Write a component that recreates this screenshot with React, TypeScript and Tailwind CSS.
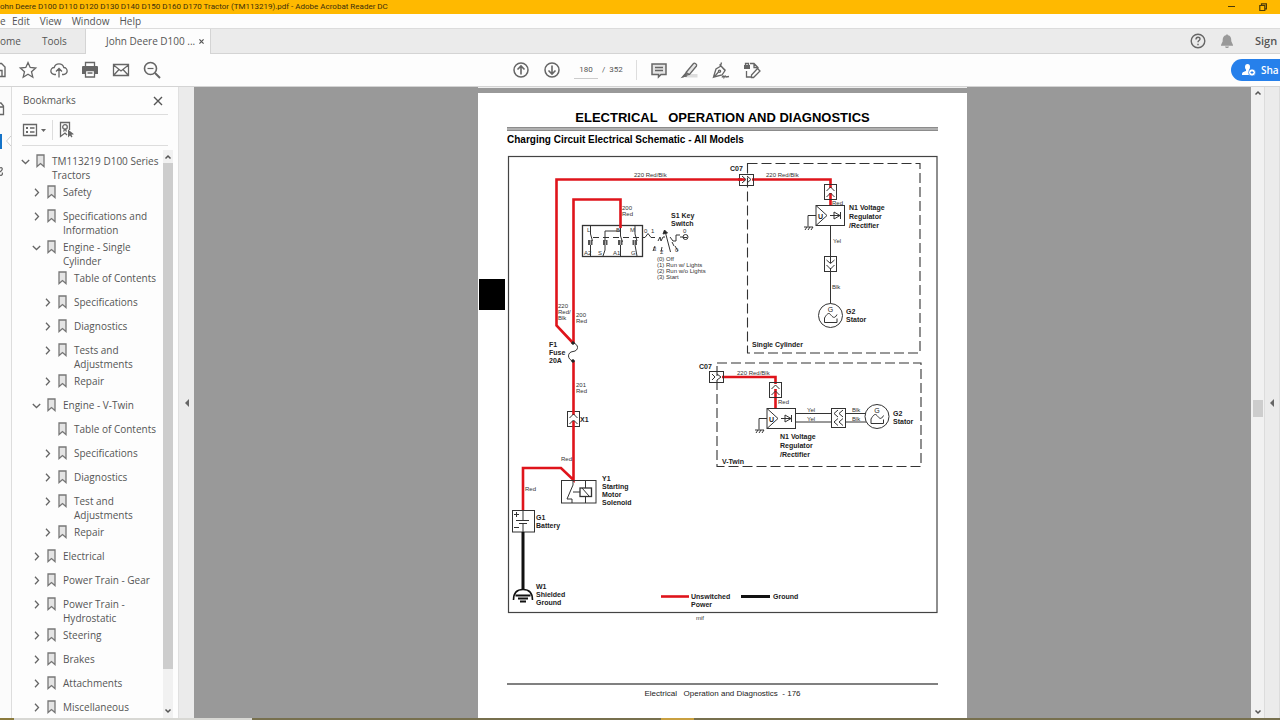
import React from "react";

type Bookmark = { title: string; state?: "open" | "closed"; children?: Bookmark[] };

const bookmarks: Bookmark[] = [
  {
    title: "TM113219 D100 Series Tractors",
    state: "open",
    children: [
      { title: "Safety", state: "closed" },
      { title: "Specifications and Information", state: "closed" },
      {
        title: "Engine - Single Cylinder",
        state: "open",
        children: [
          { title: "Table of Contents" },
          { title: "Specifications", state: "closed" },
          { title: "Diagnostics", state: "closed" },
          { title: "Tests and Adjustments", state: "closed" },
          { title: "Repair", state: "closed" },
        ],
      },
      {
        title: "Engine - V-Twin",
        state: "open",
        children: [
          { title: "Table of Contents" },
          { title: "Specifications", state: "closed" },
          { title: "Diagnostics", state: "closed" },
          { title: "Test and Adjustments", state: "closed" },
          { title: "Repair", state: "closed" },
        ],
      },
      { title: "Electrical", state: "closed" },
      { title: "Power Train - Gear", state: "closed" },
      { title: "Power Train - Hydrostatic", state: "closed" },
      { title: "Steering", state: "closed" },
      { title: "Brakes", state: "closed" },
      { title: "Attachments", state: "closed" },
      { title: "Miscellaneous", state: "closed" },
    ],
  },
];

function Icon({ children, className = "size-5" }: { children: React.ReactNode; className?: string }) {
  return (
    <svg viewBox="0 0 20 20" className={className} fill="none" stroke="#666" strokeWidth="1.3" aria-hidden="true">
      {children}
    </svg>
  );
}

function IconButton({ label, children }: { label: string; children: React.ReactNode }) {
  return (
    <button type="button" aria-label={label} className="size-5 shrink-0">
      <Icon>{children}</Icon>
    </button>
  );
}

function BookmarkGlyph() {
  return (
    <svg viewBox="0 0 9 14" className="h-[14px] w-[9px] shrink-0" aria-hidden="true">
      <path d="M1 1h7v11.6L4.500 9.600 1 12.600z" fill="#e4e4e4" stroke="#777" strokeWidth="1.300" />
    </svg>
  );
}

function Tree({ items, nested = false }: { items: Bookmark[]; nested?: boolean }) {
  return (
    <ul className={nested ? "pl-[11px]" : ""}>
      {items.map((item) => (
        <li key={item.title}>
          <div className="flex min-h-6 items-start pb-[3px]">
            {item.state ? (
              <button
                type="button"
                aria-label={item.title}
                aria-expanded={item.state === "open"}
                className="mt-[3px] size-[9px] shrink-0"
              >
                <svg viewBox="0 0 9 9" className="size-[9px]" fill="none" stroke="#666" strokeWidth="1.300">
                  <path d={item.state === "open" ? "M.8 3l3.700 3.500L8.200 3" : "M3 .8l3.500 3.700L3 8.200"} />
                </svg>
              </button>
            ) : (
              <span className="w-[9px] shrink-0" />
            )}
            <span className="ml-[6px] flex">
              <BookmarkGlyph />
            </span>
            <a href="#page" className="ml-[7px] leading-[14px]">
              {item.title}
            </a>
          </div>
          {item.children && <Tree items={item.children} nested />}
        </li>
      ))}
    </ul>
  );
}

function ScrollArrow({ up = false }: { up?: boolean }) {
  return (
    <svg viewBox="0 0 10 10" className="size-[10px] shrink-0" fill="none" stroke="#555" strokeWidth="1.500" aria-hidden="true">
      <path d={up ? "M2.500 6.500L5 4l2.500 2.500" : "M2.500 3.500L5 6l2.500-2.500"} />
    </svg>
  );
}

function TextLines({ x, y, lines, step = 8 }: { x: number; y: number; lines: string[]; step?: number }) {
  return (
    <text x={x} y={y}>
      {lines.map((line, i) => (
        <tspan key={line} x={x} y={y + i * step}>
          {line}
        </tspan>
      ))}
    </text>
  );
}

function Stator({ x, y }: { x: number; y: number }) {
  return (
    <g transform={`translate(${x} ${y})`}>
      <circle r="12" fill="#fff" />
      <path d="M-6 2.500C-4-1-2-3.500 0-1S4 4 6.500-1M-6 2.500V7H6.500V3" />
      <text x="0" y="-4" textAnchor="middle" fontSize="7" fill="#222" stroke="none">
        G
      </text>
    </g>
  );
}

function Regulator({ x, y }: { x: number; y: number }) {
  return (
    <g transform={`translate(${x} ${y})`}>
      <rect width="28.500" height="20" fill="#fff" />
      <path d="M0 0l11 10L0 20M14 10h11M18 6.500v7l6-3.500zM24.500 6.500v7" />
      <path d="M0 10h-8v11M-12 21.500h9M-9 21.500l-2 3M-6 21.500l-2 3M-3 21.500l-2 3" />
      <text x="2" y="13" fontSize="7" fontWeight="700" fill="#222" stroke="none">
        U
      </text>
    </g>
  );
}

function Schematic() {
  return (
    <svg
      viewBox="507 155 431 470"
      className="min-w-0 flex-1"
      fontFamily='"Liberation Sans", Arial, sans-serif'
      role="img"
      aria-label="Charging circuit schematic"
    >
      <rect x="508.500" y="156.500" width="428.500" height="456" fill="none" stroke="#444" strokeWidth="1.200" />

      <g fill="none" stroke="#333" strokeWidth="1.100" strokeDasharray="10 4">
        <rect x="747.500" y="163.500" width="172.500" height="189.500" />
        <rect x="717" y="363" width="204" height="103.500" />
      </g>

      <g fill="none" stroke="#333" strokeWidth="1">
        <path d="M830.500 225v79M795 413.500h72M795 422h72" />
        <rect x="582.500" y="225.500" width="60" height="31" strokeWidth="1.300" />
        <path d="M590.500 226v8l2 7M590.500 245v11M605 245v5l-2 6M605 241v-10h15M620.500 228v8l2 6M620.500 245v11M635 226v8l2 7M635 245l2 11" />
        <path d="M593 237.500h47" strokeDasharray="6 4" />
        <path d="M589 240v5M591.500 240v5M604 240v5M606.500 240v5M619 240v5M621.500 240v5M633.500 240v5M636 240v5" stroke="#555" strokeWidth="2" />
        <path d="M643 237.500h2l3-4 3 4h4M658 241l2-4 1 4 2-4h2M670 237l3 4h3v-6h4M680 237h3M655 246l-2 5M662 247l-1 5M665 231l5.500 21M672 242l2 4M675 246l3 5M687 237.500h-4" />
        <circle cx="685.500" cy="237" r="2.500" />
        <path d="M663 234l1.500-4 3 3z" fill="#222" />
      </g>

      <g fill="none" stroke="#df141b" strokeWidth="2.600">
        <path d="M742 179.500H556.500V325.500L573 343" />
        <path d="M620.500 228V199.500H573.500V343" />
        <path d="M573.500 361v119L561 468H523v43" />
        <path d="M752 179.500h78.500V188M830.500 193v12M722 377h53.500v7M775.500 389v19.500" />
        <path d="M661 596.500h28" />
      </g>

      <g fill="none" stroke="#333" strokeWidth="1">
        <rect x="739.500" y="174.500" width="14" height="11" />
        <path d="M738 179.500h7" stroke="#df141b" strokeWidth="2.600" />
        <path d="M742 176l4 3.500-4 3.500M747 176l4 3.500-4 3.500" />
        <rect x="709.500" y="371.500" width="14" height="11" />
        <path d="M712 374l3 3-3 3M717 374l4 3-4 3" />
        <rect x="824.500" y="184.500" width="12" height="15" />
        <path d="M826.500 191l4-4 4 4M826.500 197l4-4 4 4" />
        <rect x="769.500" y="382.500" width="12" height="15" />
        <path d="M771.500 389l4-4 4 4M771.500 395l4-4 4 4" />
        <rect x="824.500" y="256.500" width="12" height="15" fill="#fff" />
        <path d="M830.500 257v6M830.500 268v4M826.500 260l4 3.500 4-3.500M826.500 265l4 4 4-4" />
        <rect x="831.500" y="408.500" width="14" height="19" fill="#fff" />
        <path d="M838 410l-4 3.500 4 3.500M843 410l-4 3.500 4 3.500M838 418.500l-4 3.500 4 3.500M843 418.500l-4 3.500 4 3.500" />
        <rect x="567.500" y="411.500" width="12" height="15" fill="#fff" />
        <path d="M573.500 411v4M573.500 421v6" stroke="#df141b" strokeWidth="2.600" />
        <path d="M569.500 418l4-4 4 4M569.500 424l4-4 4 4" />
        <Regulator x={816} y={205.5} />
        <Regulator x={767} y={408.5} />
        <Stator x={830.5} y={315.5} />
        <Stator x={877} y={416.5} />
      </g>

      <g fill="none" stroke="#333" strokeWidth="1">
        <path d="M573 343c6 1 6 8 0 8.500s-6 8 0 9.500" />
        <circle cx="573" cy="343" r="1.300" fill="#111" />
        <circle cx="573" cy="361" r="1.300" fill="#111" />
        <rect x="561.500" y="480.500" width="34.500" height="22.500" />
        <path d="M573 481v4l-6 14h5v4M573 492h7M585.500 481v7M585.500 496v7" />
        <rect x="580" y="488" width="11.500" height="8.500" strokeWidth="1.300" />
        <path d="M582 488l7 8" />
        <rect x="512.500" y="510.500" width="22" height="21.500" fill="#fff" />
        <path d="M523 511v9M516 520.500h13M519 523.500h8M523 524v8M514 514.500h5M516.500 512v5M514 527.500h5" />
      </g>

      <path d="M523 532v58M741 596.500h29" stroke="#111" strokeWidth="3" />
      <g fill="none" stroke="#111" strokeWidth="1.600">
        <path d="M513.500 600c0-7 3.500-10.500 9.500-10.500s9.500 3.500 9.500 10.500" />
        <path d="M515.500 595.500h15M518 598.500h10M520 601.500h6" strokeWidth="2" />
      </g>

      <g fontSize="7" fontWeight="700" fill="#222">
        <text x="730" y="171">C07</text>
        <text x="699" y="369">C07</text>
        <TextLines x={671} y={218} lines={["S1 Key", "Switch"]} />
        <TextLines x={849} y={210} lines={["N1 Voltage", "Regulator", "/Rectifier"]} step={9} />
        <TextLines x={846} y={314} lines={["G2", "Stator"]} />
        <text x="752" y="347">Single Cylinder</text>
        <TextLines x={549} y={347} lines={["F1", "Fuse", "20A"]} />
        <text x="580" y="422">X1</text>
        <TextLines x={602} y={481} lines={["Y1", "Starting", "Motor", "Solenoid"]} />
        <TextLines x={536} y={520} lines={["G1", "Battery"]} />
        <TextLines x={536} y={589} lines={["W1", "Shielded", "Ground"]} />
        <TextLines x={780} y={439} lines={["N1 Voltage", "Regulator", "/Rectifier"]} step={9} />
        <TextLines x={893} y={416} lines={["G2", "Stator"]} />
        <text x="722" y="464">V-Twin</text>
        <TextLines x={691} y={599} lines={["Unswitched", "Power"]} />
        <text x="773" y="599">Ground</text>
      </g>

      <g fontSize="6" fill="#333">
        <text x="634" y="177">220 Red/Blk</text>
        <text x="766" y="177">220 Red/Blk</text>
        <text x="737" y="375">220 Red/Blk</text>
        <TextLines x={622} y={210} lines={["200", "Red"]} step={6} />
        <TextLines x={558} y={308} lines={["220", "Red/", "Blk"]} step={6} />
        <TextLines x={576} y={317} lines={["200", "Red"]} step={6} />
        <TextLines x={576} y={387} lines={["201", "Red"]} step={6} />
        <text x="561" y="461">Red</text>
        <text x="525" y="491">Red</text>
        <text x="832" y="205">Red</text>
        <text x="778" y="404">Red</text>
        <text x="833" y="243">Yel</text>
        <text x="832" y="289">Blk</text>
        <text x="807" y="412">Yel</text>
        <text x="807" y="421">Yel</text>
        <text x="852" y="412">Blk</text>
        <text x="852" y="421">Blk</text>
        <text x="587" y="232">L</text>
        <text x="616" y="232">B</text>
        <text x="630" y="232">M</text>
        <text x="584" y="255">A2</text>
        <text x="598" y="255">S</text>
        <text x="613" y="255">A1</text>
        <text x="631" y="255">G</text>
        <text x="644" y="233">0</text>
        <text x="651" y="233">1</text>
        <text x="683" y="233">0</text>
        <text x="653" y="251">3</text>
        <text x="660" y="254">2</text>
        <text x="675" y="252">0</text>
        <TextLines x={657} y={261} lines={["(0) Off", "(1) Run w/ Lights", "(2) Run w/o Lights", "(3) Start"]} step={6} />
        <text x="696" y="620">mif</text>
      </g>
    </svg>
  );
}

function DocumentPage() {
  return (
    <article
      id="page"
      className="w-[489px] shrink-0 bg-white pt-[17px] pb-10 font-['Liberation_Sans',Arial,sans-serif] text-black"
    >
      <div className="px-[29px]">
        <h1 className="text-center text-[13px] leading-4 font-bold whitespace-pre">
          {"ELECTRICAL   OPERATION AND DIAGNOSTICS"}
        </h1>
        <div className="mt-px h-1 border-y border-[#8c8c8c] bg-[#b0b0b0]" />
        <h2 className="mt-[3px] text-[10px] leading-3 font-bold">Charging Circuit Electrical Schematic - All Models</h2>
      </div>
      <div className="mt-[9px] flex pr-[29px]">
        <div className="w-[29px] shrink-0 pt-[124px]">
          <div className="ml-px h-[31px] w-[26px] bg-black" />
        </div>
        <Schematic />
      </div>
      <footer className="mx-[29px] mt-[58px] border-t-2 border-[#808080] pt-[3px] text-center text-[8px] leading-3 whitespace-pre text-[#222]">
        {"Electrical   Operation and Diagnostics  - 176"}
      </footer>
    </article>
  );
}

function SideRail() {
  return (
    <nav aria-label="Panels" className="flex w-3 shrink-0 flex-col border-r border-[#ddd] bg-[#fbfbfb] pt-[14px]">
      <button type="button" aria-label="Page thumbnails" className="h-4 w-[5px]">
        <svg viewBox="0 0 5 16" className="h-4 w-[5px]" fill="none" stroke="#666" strokeWidth="1.300">
          <path d="M0 2h1l2.500 3v8.500H0M0 6h3.500" />
        </svg>
      </button>
      <button type="button" aria-label="Bookmarks" className="mt-[16px] flex h-4 w-full items-center justify-between">
        <span className="h-[15px] w-[2px] bg-[#1473c8]" />
        <svg viewBox="0 0 5 10" className="h-[10px] w-[5px]" fill="#fff" stroke="#ccc">
          <path d="M5 0L.5 5 5 10" />
        </svg>
      </button>
      <button type="button" aria-label="Attachments" className="mt-[15px] h-4 w-[4px]">
        <svg viewBox="0 0 4 16" className="h-4 w-[4px]" fill="none" stroke="#666" strokeWidth="1.200">
          <path d="M0 4c2-1 3 1 1.500 2.500L0 8M0 11c2 1 3-1 2-2.500" />
        </svg>
      </button>
    </nav>
  );
}

function BookmarksPanel() {
  return (
    <aside className="flex w-[166px] shrink-0 flex-col bg-[#fdfdfd] pr-[5px] text-[#555]">
      <header className="mr-[5px] ml-[10px] flex h-[28px] items-center justify-between border-b border-[#ddd] pr-[5px]">
        <h2 className="pl-px text-[10px]">Bookmarks</h2>
        <button type="button" aria-label="Close bookmarks" className="size-[10px]">
          <svg viewBox="0 0 10 10" className="size-[10px]" stroke="#555" strokeWidth="1.400">
            <path d="M1 1l8 8M9 1L1 9" />
          </svg>
        </button>
      </header>
      <div className="mr-[5px] ml-[10px] flex h-[31px] items-center border-b border-[#ddd]">
        <button type="button" aria-label="Options" className="flex items-center">
          <svg viewBox="0 0 25 14" className="h-[14px] w-[25px]" fill="none" stroke="#666" strokeWidth="1.300">
            <path d="M1.500 1.500h13v11h-13zM8 5h4.500M8 9h4.500" />
            <path d="M4 4h2v2H4zM4 8h2v2H4z" fill="#666" stroke="none" />
            <path d="M19 6h5l-2.500 3z" fill="#666" stroke="none" />
          </svg>
        </button>
        <span className="ml-[5px] h-5 w-px bg-[#ddd]" />
        <button type="button" aria-label="Find current bookmark" className="ml-[6px]">
          <svg viewBox="0 0 16 18" className="h-[18px] w-4" fill="none" stroke="#666" strokeWidth="1.300">
            <path d="M10.500 9V1.500h-9v14L6 12l2 2M4.500 10.500L6 8l1.500 2.500" />
            <circle cx="6" cy="6" r="2.300" />
            <path d="M9 8.500v8l2-2 1.500 2 1-1-1.200-1.800 2.700-.5z" fill="#666" stroke="none" />
          </svg>
        </button>
      </div>
      <div className="flex min-h-0 flex-1 pt-[4px]">
        <div className="min-w-0 flex-1 overflow-hidden pt-[4px] pl-[9px] text-[10px]">
          <Tree items={bookmarks} />
        </div>
        <div className="flex w-[10px] shrink-0 flex-col bg-[#f1f1f1] py-[2px]">
          <ScrollArrow up />
          <div className="my-px w-full grow-[14] bg-[#cdcdcd]" />
          <div className="grow" />
          <ScrollArrow />
        </div>
      </div>
    </aside>
  );
}

function CollapseHandle({ className }: { className: string }) {
  return (
    <div className={className}>
      <button type="button" aria-label="Toggle pane" className="size-2">
        <svg viewBox="0 0 8 8" className="size-2">
          <path d="M6 0v8L2 4z" fill="#666" />
        </svg>
      </button>
    </div>
  );
}

function Toolbar() {
  return (
    <div className="grid h-[33px] shrink-0 grid-cols-[1fr_auto_1fr] items-center border-b border-[#d4d4d4] bg-[#fdfdfd]">
      <div className="flex items-center gap-[11px]">
        <button type="button" aria-label="Save" className="h-5 w-[7px]">
          <svg viewBox="0 0 7 20" className="h-5 w-[7px]" fill="none" stroke="#666" strokeWidth="1.400">
            <path d="M0 3.500h1.500L5 7v9.500H0M0 10.500h2v6" />
          </svg>
        </button>
        <IconButton label="Star">
          <path d="M10 2.500l2.200 5 5.500.5-4.200 3.700 1.300 5.500-4.800-3-4.800 3 1.300-5.500L2.300 8l5.500-.5z" />
        </IconButton>
        <IconButton label="Upload">
          <path d="M7 14.500H5.500a3.500 3.500 0 0 1-.3-7 5 5 0 0 1 9.600 0 3.500 3.500 0 0 1-.3 7H13M10 17.500V9M7 11.500l3-3 3 3" />
        </IconButton>
        <IconButton label="Print">
          <path d="M5.500 6V2.500h9V6" />
          <path d="M3 6h14a1 1 0 0 1 1 1v7h-3v-3H5v3H2V7a1 1 0 0 1 1-1z" fill="#666" stroke="none" />
          <path d="M5.500 10.500h9v6.500h-9zM7.500 13h5" fill="#fff" />
        </IconButton>
        <IconButton label="Email">
          <path d="M2.500 4.500h15v11h-15zM2.500 5l7.500 6 7.500-6M2.500 15.500l5.500-6M17.500 15.500l-5.500-6" />
        </IconButton>
        <IconButton label="Search">
          <circle cx="8.500" cy="8.500" r="6" strokeWidth="1.600" />
          <path d="M13 13l5 5" strokeWidth="2" />
          <path d="M5.500 8.500h6" strokeWidth="1.200" />
        </IconButton>
      </div>
      <div className="flex items-center pr-[7px] font-[Roboto,sans-serif] text-[8px] text-[#555]">
        <IconButton label="Previous page">
          <circle cx="10" cy="10" r="7" strokeWidth="1.500" />
          <path d="M10 14.500V6M6.500 9.500L10 6l3.500 3.500" strokeWidth="1.600" />
        </IconButton>
        <span className="w-[11px]" />
        <IconButton label="Next page">
          <circle cx="10" cy="10" r="7" strokeWidth="1.500" />
          <path d="M10 5.500V14M6.500 10.500L10 14l3.500-3.500" strokeWidth="1.600" />
        </IconButton>
        <input
          aria-label="Page number"
          defaultValue="180"
          className="ml-[12px] h-[18px] w-6 border-b border-[#ccc] bg-transparent text-center text-[#555]"
        />
        <span className="ml-1 w-[34px] whitespace-pre">{"/  352"}</span>
        <span className="mr-3 h-5 w-px bg-[#ddd]" />
        <div className="flex gap-[11px]">
          <IconButton label="Comment">
            <path d="M3 4h14v10.500h-5L9.500 17v-2.500H3z" fill="#e4e4e4" strokeWidth="1.500" />
            <path d="M6 7.500h8M6 10.500h8" />
          </IconButton>
          <IconButton label="Highlight">
            <path d="M8 14h9.500v3.500H5z" fill="#ddd" stroke="none" />
            <path d="M6 12.500l7.500-9c1-1 4 1 3 2.500l-7 8.500-3.500.5zM6 12.500l3.500 2M6 13l-3.500 4 5-1.500" fill="#e4e4e4" />
            <path d="M5.500 13.500L2 17.500l5-1z" fill="#666" stroke="none" />
          </IconButton>
          <IconButton label="Sign">
            <path d="M2.500 17L5 9l5-3 4 4.500L11 15l-8 2 4.500-5M8.500 4.500l6 6M9.500 6l1-3.500" fill="none" />
            <circle cx="8.500" cy="11.300" r="1.100" />
            <path d="M11 17.500c1-2 1.500-2 2 0 1-2 1.500-2 2-.5l3-.5" />
          </IconButton>
          <IconButton label="More tools">
            <path d="M8 3.500h4l4 4V9M12 3.500v4h4M4.500 11v6H9M15.500 8.500l2.500 2.500-6.500 6.500H9.500V15z" />
            <path d="M2 5h6v4H2z" fill="#666" stroke="none" />
            <path d="M3.500 5V3.500h3V5" />
          </IconButton>
        </div>
      </div>
      <button
        type="button"
        className="flex h-[22px] w-[49px] items-center gap-[5px] justify-self-end overflow-hidden rounded-l-full bg-[#2680eb] pl-[11px] text-[10px] font-semibold text-white"
      >
        <svg viewBox="0 0 14 12" className="h-3 w-[14px] shrink-0" fill="#fff" aria-hidden="true">
          <ellipse cx="5.500" cy="3" rx="2.500" ry="3" />
          <path d="M4 5h3v2l2 1v3H0c0-3 1-3 4-4z" />
          <circle cx="10" cy="8.500" r="3.500" stroke="#2680eb" strokeWidth=".7" />
          <path d="M8.500 8.500h3M10 7v3" stroke="#2680eb" />
        </svg>
        Sha
      </button>
    </div>
  );
}

export default function App() {
  return (
    <div className="flex h-screen flex-col overflow-hidden bg-[#ebebeb] font-['Open_Sans',sans-serif] text-[10px] text-[#555]">
      <header className="flex h-[14px] shrink-0 items-center justify-between bg-[#ffb900] pr-[13px]">
        <span className="pb-px font-[Roboto,sans-serif] text-[8px] leading-3 whitespace-nowrap text-[#3b2f0c]">
          ohn Deere D100 D110 D120 D130 D140 D150 D160 D170 Tractor (TM113219).pdf - Adobe Acrobat Reader DC
        </span>
        <span className="flex gap-[24px]">
          <button type="button" aria-label="Minimize" className="size-2">
            <svg viewBox="0 0 8 8" className="size-2" stroke="#4a3a08">
              <path d="M1 3.500h7" />
            </svg>
          </button>
          <button type="button" aria-label="Restore" className="size-2">
            <svg viewBox="0 0 8 8" className="size-2" fill="none" stroke="#4a3a08" strokeWidth="1.200">
              <path d="M.8 2.500h5v5h-5zM2.500 2.500V.8h5v5H6" />
            </svg>
          </button>
        </span>
      </header>

      <nav aria-label="Menu" className="flex h-[14px] shrink-0 items-center gap-[10px] bg-[#fdfdfd] leading-3">
        <button type="button" className="w-[2px] text-left">e</button>
        <button type="button">Edit</button>
        <button type="button">View</button>
        <button type="button">Window</button>
        <button type="button">Help</button>
      </nav>

      <div className="flex h-[26px] shrink-0 items-stretch border-t border-[#dcdcdc]">
        <div className="flex w-[86px] items-center gap-[21px] border-r border-b border-[#d4d4d4]">
          <button type="button">ome</button>
          <button type="button">Tools</button>
        </div>
        <div className="flex w-[124px] items-center justify-between bg-[#fdfdfd] pr-[6px] pl-5">
          <button type="button" className="whitespace-nowrap">John Deere D100 ...</button>
          <button type="button" aria-label="Close tab" className="size-[5px]">
            <svg viewBox="0 0 6 6" className="size-[5px]" stroke="#555" strokeWidth="1.400">
              <path d="M.5.5l5 5M5.500.5l-5 5" />
            </svg>
          </button>
        </div>
        <div className="flex flex-1 items-center justify-end border-b border-l border-[#d4d4d4]">
          <button type="button" aria-label="Help" className="size-4">
            <svg viewBox="0 0 16 16" className="size-4" fill="none" stroke="#666" strokeWidth="1.400">
              <circle cx="8" cy="8" r="6.800" />
              <path d="M6 6.500c0-3 4-3 4-.5 0 1.500-2 1.500-2 3.200M8 10.700v1.500" />
            </svg>
          </button>
          <button type="button" aria-label="Notifications" className="ml-[13px] size-4">
            <svg viewBox="0 0 16 16" className="size-4" fill="#999">
              <path d="M8 1l1 1.300c3 .7 3.300 3 3.300 6L14 12v.8H2V12l1.700-3.700c0-3 .3-5.300 3.300-6zM6 13.500h4c-.5 2-3.500 2-4 0z" />
            </svg>
          </button>
          <button type="button" className="ml-[20px] w-[25px] text-left text-[11px] font-semibold">Sign</button>
        </div>
      </div>

      <Toolbar />

      <div className="flex min-h-0 flex-1">
        <SideRail />
        <BookmarksPanel />
        <CollapseHandle className="flex w-4 shrink-0 items-center justify-center border-l border-[#e0e0e0] bg-[#ebebeb]" />
        <main className="flex min-w-0 flex-1 flex-col items-center overflow-hidden bg-[#999]">
          <div className="h-px w-[489px] shrink-0 bg-[#eee]" />
          <div className="h-[5px] shrink-0" />
          <DocumentPage />
        </main>
        <div className="flex w-[13px] shrink-0 flex-col items-center bg-[#f1f1f1] py-px">
          <ScrollArrow up />
          <div className="grow-[303]" />
          <div className="h-[17px] w-[10px] bg-[#cdcdcd]" />
          <div className="grow-[291]" />
          <ScrollArrow />
        </div>
        <CollapseHandle className="flex w-4 shrink-0 items-center justify-center border-x border-[#dcdcdc] bg-[#ebebeb]" />
      </div>

      <div className="flex h-[2px] shrink-0 bg-[#77704e]">
        <div className="w-[14px] bg-[#8a7a3c]" />
        <div className="w-[238px] bg-[#d8d8d4]" />
        <div className="ml-[409px] w-[33px] bg-[#c9a040]" />
      </div>
    </div>
  );
}
